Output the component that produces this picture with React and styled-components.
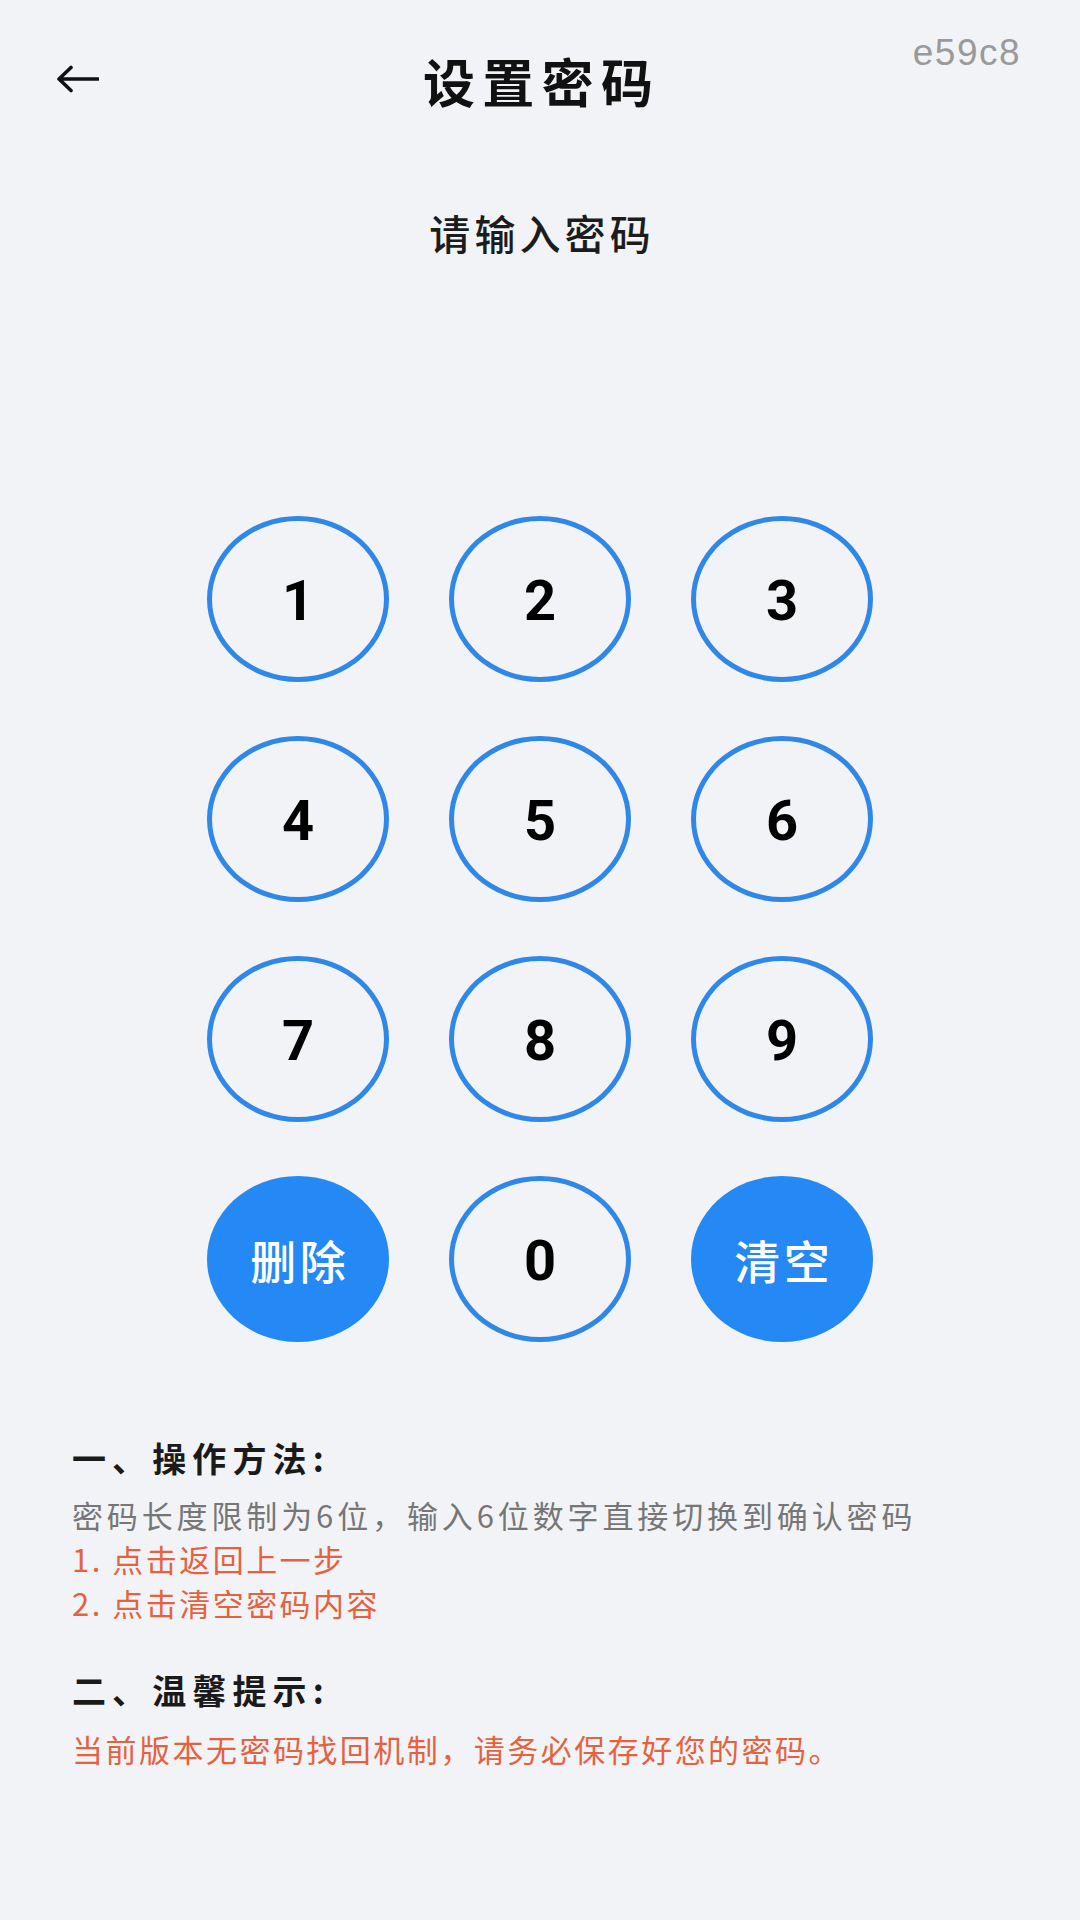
import React from 'react';
import styled, { createGlobalStyle } from 'styled-components';

const GlobalStyle = createGlobalStyle`
  html, body {
    margin: 0;
    padding: 0;
    background: #f2f3f7;
  }
  * {
    box-sizing: border-box;
  }
`;

const cjk = `"Noto Sans CJK SC", "Noto Sans", sans-serif`;

const Page = styled.div`
  width: 1080px;
  min-height: 1920px;
  background: #f2f3f7;
  font-family: ${cjk};
  color: #111;
  display: flex;
  flex-direction: column;
`;

// Barra superior: flecha, título centrado y código de versión
const Header = styled.header`
  height: 162px;
  padding: 0 59px 0 55px;
  display: grid;
  grid-template-columns: 1fr auto 1fr;
  align-items: center;
`;

const BackButton = styled.button`
  justify-self: start;
  border: none;
  background: none;
  padding: 0;
  margin-top: -4px;
  display: flex;
  cursor: pointer;
`;

const Title = styled.h1`
  margin: 0;
  padding-left: 0.14em;
  font-size: 52px;
  font-weight: 700;
  line-height: 1;
  letter-spacing: 0.14em;
  color: #111;
`;

const Tag = styled.span`
  justify-self: end;
  align-self: start;
  margin-top: 34px;
  font-family: "Liberation Sans", Arial, sans-serif;
  font-size: 37px;
  line-height: 1;
  color: #9a9a9a;
  letter-spacing: 0.04em;
`;

const Prompt = styled.h2`
  margin: 40px 0 0;
  padding-left: 0.1em;
  text-align: center;
  font-size: 41px;
  font-weight: 500;
  line-height: 60px;
  letter-spacing: 0.1em;
  color: #1c1c1c;
`;

const Keypad = styled.div`
  margin: 254px auto 0;
  display: grid;
  grid-template-columns: repeat(3, 182px);
  grid-auto-rows: 166px;
  column-gap: 60px;
  row-gap: 54px;
`;

const Key = styled.button`
  border-radius: 50%;
  border: ${({ $filled }) => ($filled ? 'none' : '5px solid #2f88e8')};
  background: ${({ $filled }) => ($filled ? '#2589f5' : 'transparent')};
  color: ${({ $filled }) => ($filled ? '#fff' : '#000')};
  font-family: ${({ $filled }) => ($filled ? cjk : `Roboto, "Noto Sans", sans-serif`)};
  font-size: ${({ $filled }) => ($filled ? '46px' : '56px')};
  font-weight: ${({ $filled }) => ($filled ? 500 : 700)};
  letter-spacing: ${({ $filled }) => ($filled ? '0.08em' : '0')};
  padding: ${({ $filled }) => ($filled ? '0 0 0 0.08em' : '4px 0 0')};
  line-height: 1;
  display: flex;
  align-items: center;
  justify-content: center;
  cursor: pointer;
`;

const Notes = styled.section`
  margin-top: 94px;
  padding: 0 60px 0 72px;
  display: flex;
  flex-direction: column;
`;

const NoteTitle = styled.h3`
  margin: ${({ $first }) => ($first ? '0' : '43px')} 0 0;
  font-size: 34px;
  font-weight: 700;
  line-height: 44px;
  letter-spacing: 0.18em;
  color: #1a1a1a;
`;

const NoteLine = styled.p`
  margin: ${({ $gap }) => $gap || 0}px 0 0;
  font-size: 31px;
  font-weight: 400;
  line-height: 44px;
  letter-spacing: ${({ $warn }) => ($warn ? '0.08em' : '0.125em')};
  color: ${({ $warn }) => ($warn ? '#e6623f' : '#767676')};
  white-space: nowrap;
`;

const BackArrow = () => (
  <svg width="44" height="28" viewBox="0 0 44 28" fill="none">
    <path d="M43 14H4M16 2.5L4 14l12 11.5" stroke="#111" strokeWidth="3.6" strokeLinecap="round" strokeLinejoin="round" />
  </svg>
);

const keys = ['1', '2', '3', '4', '5', '6', '7', '8', '9', '删除', '0', '清空'];

const App = () => {
  return (
    <Page>
      <GlobalStyle />
      <Header>
        <BackButton aria-label="返回">
          <BackArrow />
        </BackButton>
        <Title>设置密码</Title>
        <Tag>e59c8</Tag>
      </Header>

      <Prompt>请输入密码</Prompt>

      <Keypad>
        {keys.map((k) => (
          <Key key={k} $filled={k.length > 1}>
            {k}
          </Key>
        ))}
      </Keypad>

      <Notes>
        <NoteTitle $first>一、操作方法:</NoteTitle>
        <NoteLine $gap={13}>密码长度限制为6位，输入6位数字直接切换到确认密码</NoteLine>
        <NoteLine $warn>1. 点击返回上一步</NoteLine>
        <NoteLine $warn>2. 点击清空密码内容</NoteLine>

        <NoteTitle>二、温馨提示:</NoteTitle>
        <NoteLine $warn $gap={15}>当前版本无密码找回机制，请务必保存好您的密码。</NoteLine>
      </Notes>
    </Page>
  );
};

export default App;
